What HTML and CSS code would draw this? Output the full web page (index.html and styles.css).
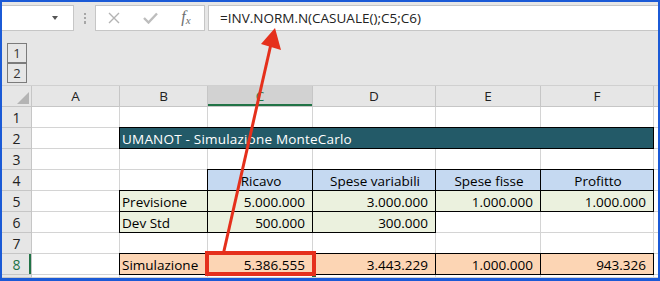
FILE: index.html
```html
<!DOCTYPE html>
<html lang="it">
<head>
    <meta charset="UTF-8">
    <title>UMANOT - Simulazione MonteCarlo</title>
    <link rel="stylesheet" href="styles.css">
</head>
<body>

<div class="window">

    <!-- barra della formula -->
    <div class="toolbar">
        <div class="namebox"><span class="caret"></span></div>
        <div class="grip">
            <svg width="4" height="26" viewBox="0 0 4 26"><rect x="1" y="8" width="2" height="2"/><rect x="1" y="12" width="2" height="2"/><rect x="1" y="16" width="2" height="3"/></svg>
        </div>
        <div class="fbuttons">
            <span class="fbtn">
                <svg width="12" height="12" viewBox="0 0 12 12"><path d="M1 1 L11 11 M11 1 L1 11" stroke="#b3b3b3" stroke-width="1.4" fill="none"/></svg>
            </span>
            <span class="fbtn">
                <svg width="15" height="12" viewBox="0 0 15 12"><path d="M1 6 L5.5 10.5 L14 1.5" stroke="#bdbdbd" stroke-width="2.4" fill="none"/></svg>
            </span>
            <span class="fbtn fx"><i>f</i><i class="x">x</i></span>
        </div>
        <div class="formula">=INV.NORM.N(CASUALE();C5;C6)</div>
    </div>

    <!-- livelli di struttura -->
    <div class="outline">
        <div class="lvl">1</div>
        <div class="lvl">2</div>
    </div>

    <!-- foglio -->
    <div class="sheet">
        <div class="h corner"><span class="tri"></span></div>
        <div class="h">A</div>
        <div class="h">B</div>
        <div class="h sel">C</div>
        <div class="h">D</div>
        <div class="h">E</div>
        <div class="h">F</div>
        <div class="h last"></div>

        <div class="rh">1</div>
        <div class="c"></div><div class="c"></div><div class="c"></div><div class="c"></div><div class="c"></div><div class="c"></div><div class="c last"></div>

        <div class="rh">2</div>
        <div class="c"></div>
        <div class="c title bx">UMANOT - Simulazione MonteCarlo</div>
        <div class="c last"></div>

        <div class="rh">3</div>
        <div class="c"></div><div class="c"></div><div class="c"></div><div class="c"></div><div class="c"></div><div class="c"></div><div class="c last"></div>

        <div class="rh">4</div>
        <div class="c"></div><div class="c"></div>
        <div class="c blue bx">Ricavo</div>
        <div class="c blue bx">Spese variabili</div>
        <div class="c blue bx">Spese fisse</div>
        <div class="c blue bx">Profitto</div>
        <div class="c last"></div>

        <div class="rh">5</div>
        <div class="c"></div>
        <div class="c green bx">Previsione</div>
        <div class="c green bx num">5.000.000</div>
        <div class="c green bx num">3.000.000</div>
        <div class="c green bx num">1.000.000</div>
        <div class="c green bx num">1.000.000</div>
        <div class="c last"></div>

        <div class="rh">6</div>
        <div class="c"></div>
        <div class="c green bx">Dev Std</div>
        <div class="c green bx num">500.000</div>
        <div class="c green bx num">300.000</div>
        <div class="c"></div><div class="c"></div><div class="c last"></div>

        <div class="rh">7</div>
        <div class="c"></div><div class="c"></div><div class="c"></div><div class="c"></div><div class="c"></div><div class="c"></div><div class="c last"></div>

        <div class="rh active">8</div>
        <div class="c"></div>
        <div class="c peach bx">Simulazione</div>
        <div class="c peach bx num">5.386.555</div>
        <div class="c peach bx num">3.443.229</div>
        <div class="c peach bx num">1.000.000</div>
        <div class="c peach bx num">943.326</div>
        <div class="c last"></div>

        <div class="rh"></div>
        <div class="c"></div><div class="c"></div><div class="c"></div><div class="c"></div><div class="c"></div><div class="c"></div><div class="c last"></div>
    </div>

</div>

<!-- evidenziazione: riquadro rosso e freccia verso la formula -->
<svg class="marks" width="660" height="281" viewBox="0 0 660 281">
    <rect x="312" y="273" width="4" height="4" fill="#217346"/>
    <rect x="207" y="253" width="107" height="21" fill="none" stroke="#e5301c" stroke-width="4"/>
    <line x1="223.5" y1="253" x2="271" y2="44" stroke="#e5301c" stroke-width="3"/>
    <polygon points="275,28 261,44 281,50" fill="#e5301c"/>
</svg>

</body>
</html>
```

FILE: styles.css
```css
*{
    margin: 0;
    padding: 0;
    box-sizing: border-box;
}

body{
    position: relative;
    width: 660px;
    height: 281px;
    overflow: hidden;
    font-family: "Open Sans", "Liberation Sans", sans-serif;
    color: #000;
}

.window{
    height: 281px;
    display: flex;
    flex-direction: column;
    border: solid #1b5ad6;
    border-width: 2px 2px 3px 2px;
    background-color: #e6e6e6;
}

/* barra formula */
.toolbar{
    height: 29px;
    padding-top: 3px;
    display: flex;
    align-items: flex-start;
}

.namebox{
    width: 72px;
    height: 26px;
    background-color: #fff;
    border: 1px solid #c6c6c6;
    border-left: 0;
    display: flex;
    align-items: center;
    justify-content: flex-end;
    padding-right: 15px;
}

.caret{
    width: 0;
    height: 0;
    border-left: 3.5px solid transparent;
    border-right: 3.5px solid transparent;
    border-top: 4px solid #555;
}

.grip{
    width: 21px;
    height: 26px;
    display: flex;
    justify-content: center;
    fill: #a6a6a6;
}

.fbuttons{
    width: 110px;
    height: 26px;
    background-color: #fff;
    border: 1px solid #c6c6c6;
    display: flex;
}

.fbtn{
    width: 36px;
    display: flex;
    align-items: center;
    justify-content: center;
}

.fx{
    font-family: "Liberation Serif", serif;
    color: #6e6e6e;
    font-size: 16px;
    padding-bottom: 2px;
}

.fx .x{
    font-size: 11px;
    margin-top: 5px;
}

.formula{
    flex: 1;
    height: 26px;
    margin-left: 3px;
    background-color: #fff;
    border: 1px solid #c6c6c6;
    border-right: 0;
    padding-left: 11px;
    font-size: 13.5px;
    line-height: 24px;
    color: #222;
}

/* struttura */
.outline{
    height: 55px;
    padding: 12px 0 0 5px;
    border-bottom: 1px solid #d0d0d0;
}

.lvl{
    width: 20px;
    height: 20px;
    border: 1px solid #7b7b7b;
    font-size: 13px;
    line-height: 18px;
    text-align: center;
    color: #333;
}

/* foglio */
.sheet{
    flex: 1;
    display: grid;
    grid-template-columns: 30px 88px 88px 105px 123px 105px 113px 1fr;
    grid-template-rows: repeat(9, 21px) 1fr;
    overflow: hidden;
}

.h, .rh{
    background-color: #e6e6e6;
    border-right: 1px solid #c6c6c6;
    border-bottom: 1px solid #c6c6c6;
    font-size: 13.5px;
    line-height: 20px;
    text-align: center;
    color: #222;
}

.rh{
    font-size: 14px;
    padding-top: 1px;
}

.corner{
    display: flex;
    align-items: flex-end;
    justify-content: flex-end;
    padding: 0 2px 2px 0;
}

.tri{
    width: 0;
    height: 0;
    border-left: 12px solid transparent;
    border-bottom: 12px solid #b4b4b4;
}

.sel{
    background-color: #d2d2d2;
    box-shadow: inset 0 -2px #217346;
    color: #217346;
}

.active{
    box-shadow: inset -2px 0 #217346;
    color: #217346;
}

.c{
    background-color: #fff;
    border-right: 1px solid #d4d4d4;
    border-bottom: 1px solid #d4d4d4;
    font-size: 13.5px;
    line-height: 20px;
    padding: 1px 0 0 2px;
    white-space: nowrap;
}

.last{
    border-right: 0;
}

.bx{
    position: relative;
}

.bx::after{
    content: "";
    position: absolute;
    inset: -1px;
    border: 1px solid #000;
}

.title{
    grid-column: span 5;
    background-color: #235a68;
    color: #fff;
    letter-spacing: 0.2px;
}

.blue{
    background-color: #c5d9f1;
    text-align: center;
}

.green{
    background-color: #ebf1de;
}

.peach{
    background-color: #fcd5b4;
}

.num{
    text-align: right;
    padding-right: 7px;
}

.marks{
    position: absolute;
    top: 0;
    left: 0;
    pointer-events: none;
}
```
